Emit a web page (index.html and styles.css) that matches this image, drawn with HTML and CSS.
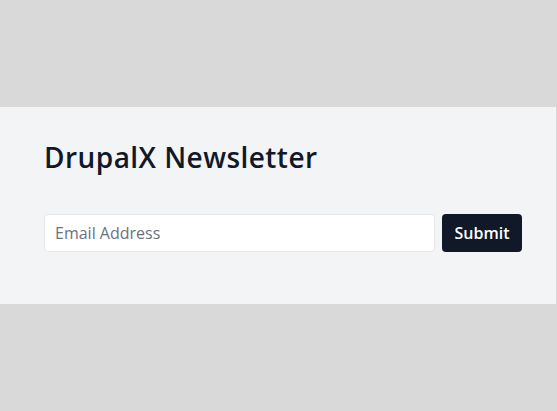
FILE: index.html
```html
<!DOCTYPE html>
<html lang="en">
<head>
<meta charset="utf-8">
<title>DrupalX Newsletter</title>
<link rel="stylesheet" href="styles.css">
</head>
<body>
<div class="page">
  <section class="newsletter">
    <h2 class="newsletter-title">DrupalX Newsletter</h2>
    <form class="newsletter-form">
      <input class="newsletter-input" type="email" placeholder="Email Address">
      <button class="newsletter-button" type="button">Submit</button>
    </form>
  </section>
</div>
</body>
</html>
```
FILE: styles.css
```css
html, body {
  margin: 0;
  padding: 0;
  background: #d9d9d9;
  height: 100%;
}
.page {
  padding-top: 107px;
  font-family: "Open Sans", "Noto Sans", sans-serif;
}
.newsletter {
  width: 556px;
  box-sizing: border-box;
  background: #f3f4f6;
  padding: 32px 34px 52px 44px;
}
.newsletter-title {
  margin: 0;
  font-size: 28px;
  line-height: 36px;
  font-weight: 600;
  letter-spacing: 0.45px;
  color: #111827;
}
.newsletter-form {
  display: flex;
  gap: 7px;
  margin: 39px 0 0;
}
.newsletter-input {
  flex: 1;
  height: 38px;
  box-sizing: border-box;
  border: 1px solid #e5e7eb;
  border-radius: 4px;
  background: #fff;
  padding: 0 10px;
  font-family: inherit;
  font-size: 16px;
  color: #111827;
  outline: none;
}
.newsletter-input::placeholder {
  color: #6b7280;
  opacity: 1;
}
.newsletter-button {
  width: 80px;
  height: 38px;
  border: 0;
  border-radius: 4px;
  background: #111827;
  color: #fff;
  font-family: inherit;
  font-size: 16px;
  font-weight: 600;
  padding: 0;
}
```
